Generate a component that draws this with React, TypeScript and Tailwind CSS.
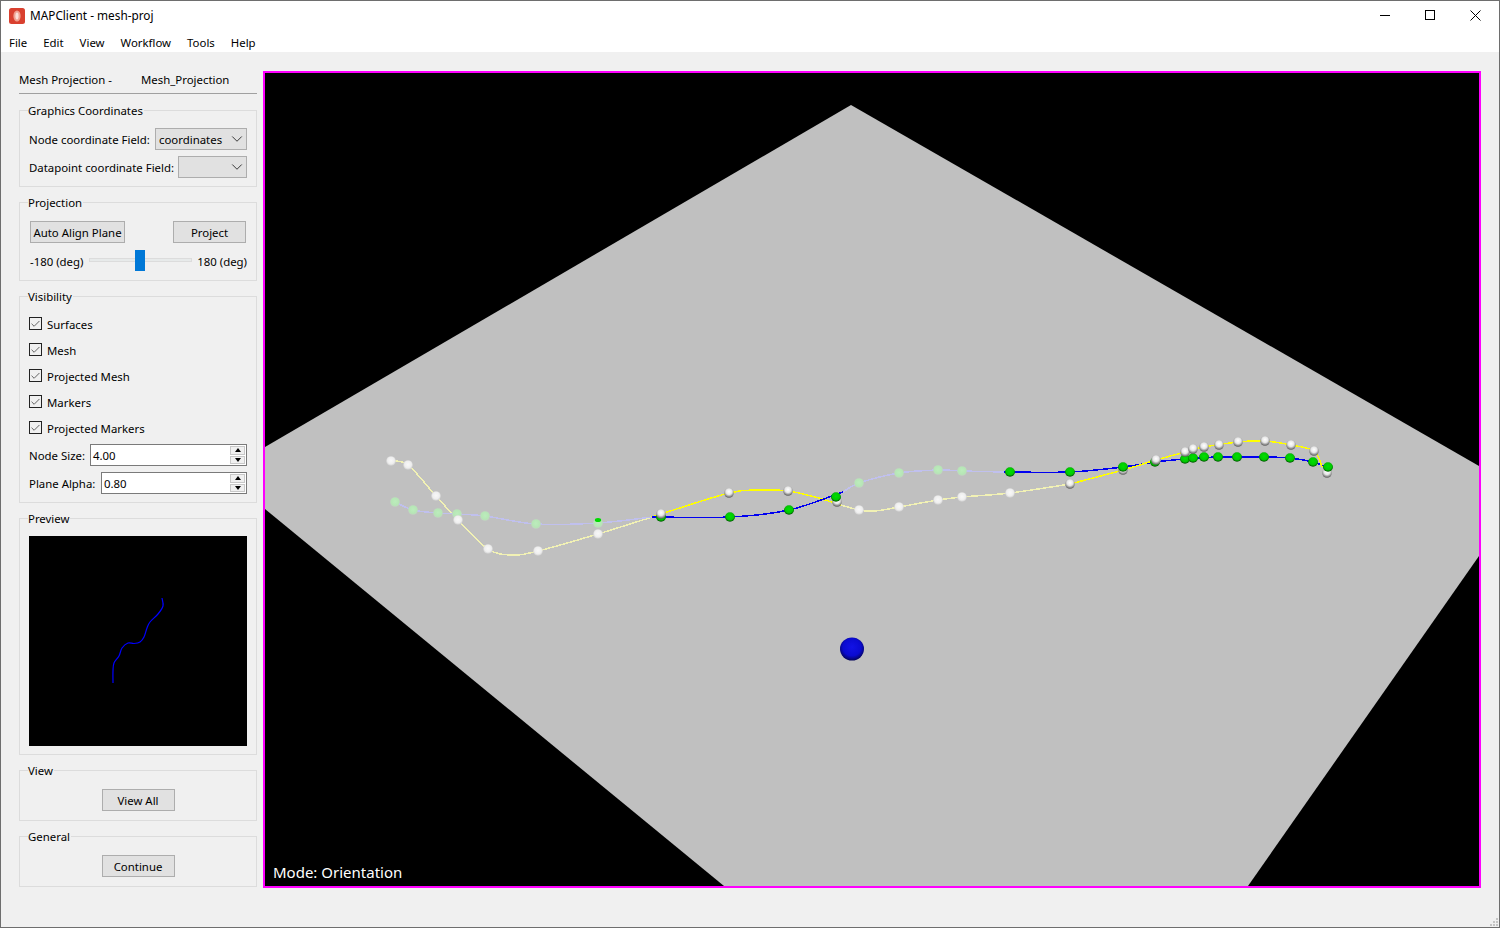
import { ChevronDown, Check } from 'lucide-react';
import type { ReactNode } from 'react';

type Pt = [number, number];

const font = "font-['Noto_Sans','Open_Sans',sans-serif]";

// page coordinates, the viewBox of the scene starts at the canvas corner
const whiteFaded: Pt[] = [[391, 461], [408, 465], [436, 496], [458, 520], [488, 549], [538, 551], [598, 534], [859, 510], [899, 507], [938, 500], [962, 497], [1010, 493]];
const whiteSolid: Pt[] = [[661, 514], [729, 493], [788, 491], [837, 502], [1070, 484], [1123, 470], [1156, 460], [1185, 452], [1193, 449], [1204, 447], [1219, 445], [1238, 442], [1265, 441], [1291, 445], [1314, 451], [1327, 473]];
const greenFaded: Pt[] = [[395, 502], [413, 510], [438, 513], [457, 514], [485, 516], [536, 524], [598, 523], [859, 483], [899, 473], [938, 470], [962, 471]];
const greenSolid: Pt[] = [[661, 517], [730, 517], [789, 510], [1010, 472], [1070, 472], [1155, 462], [1185, 459], [1193, 458], [1204, 457], [1218, 457], [1237, 457], [1264, 457], [1290, 458], [1313, 462]];
const greenTop: Pt[] = [[836, 497], [1123, 467], [1328, 467]];

const lines: { pts: Pt[]; color: string }[] = [
  { pts: [[391, 461], [408, 465], [436, 496], [458, 520], [488, 549], [512, 555], [538, 551], [598, 534], [652, 517]], color: '#f1f1b4' },
  { pts: [[395, 502], [413, 510], [438, 513], [457, 514], [485, 516], [536, 524], [598, 523], [652, 517]], color: '#c0c0ee' },
  { pts: [[843, 492], [859, 483], [899, 473], [938, 470], [962, 471], [1004, 472]], color: '#c0c0ee' },
  { pts: [[841, 505], [859, 510], [875, 511], [899, 507], [938, 500], [962, 497], [1010, 493], [1070, 484]], color: '#f1f1b4' },
  { pts: [[652, 517], [661, 514], [729, 493], [760, 490], [788, 491], [815, 497], [841, 505]], color: '#ffff00' },
  { pts: [[652, 517], [730, 517], [789, 510], [843, 492]], color: '#0000f0' },
  { pts: [[1004, 472], [1070, 472], [1123, 467], [1155, 462], [1185, 459], [1218, 457], [1264, 457], [1290, 458], [1313, 462], [1324, 466]], color: '#0000f0' },
  { pts: [[1070, 484], [1123, 470], [1156, 460], [1185, 452], [1204, 447], [1238, 442], [1265, 441], [1291, 445], [1314, 451], [1322, 467]], color: '#ffff00' },
];

const previewCurve: Pt[] = [[133, 62], [134, 70], [129, 78], [121, 86], [118, 92], [115, 101], [111, 106], [105, 107.5], [99, 107], [93, 112], [90, 120], [85, 127], [84, 135], [84, 147]];

// Catmull-Rom through the points
function smooth(pts: Pt[]) {
  let d = `M${pts[0][0]} ${pts[0][1]}`;
  for (let i = 0; i < pts.length - 1; i++) {
    const p0 = pts[Math.max(i - 1, 0)];
    const p1 = pts[i];
    const p2 = pts[i + 1];
    const p3 = pts[Math.min(i + 2, pts.length - 1)];
    const c1 = [p1[0] + (p2[0] - p0[0]) / 6, p1[1] + (p2[1] - p0[1]) / 6];
    const c2 = [p2[0] - (p3[0] - p1[0]) / 6, p2[1] - (p3[1] - p1[1]) / 6];
    d += ` C${c1[0]} ${c1[1]} ${c2[0]} ${c2[1]} ${p2[0]} ${p2[1]}`;
  }
  return d;
}

function Scene() {
  return (
    <svg viewBox="265 73 1214 813" className="block h-full w-full">
      <defs>
        <radialGradient id="white" cx="50%" cy="36%" r="62%">
          <stop offset="0%" stopColor="#ffffff" />
          <stop offset="50%" stopColor="#e6e6e6" />
          <stop offset="100%" stopColor="#5e5e5e" />
        </radialGradient>
        <radialGradient id="whiteFaded" cx="50%" cy="45%" r="55%">
          <stop offset="0%" stopColor="#f8f8f8" />
          <stop offset="65%" stopColor="#eeeeee" />
          <stop offset="100%" stopColor="#cccccc" />
        </radialGradient>
        <radialGradient id="green" cx="50%" cy="42%" r="58%">
          <stop offset="0%" stopColor="#00e000" />
          <stop offset="65%" stopColor="#00c800" />
          <stop offset="100%" stopColor="#004f00" />
        </radialGradient>
        <radialGradient id="greenFaded" cx="50%" cy="45%" r="55%">
          <stop offset="0%" stopColor="#bcecbc" />
          <stop offset="70%" stopColor="#b6e6b6" />
          <stop offset="100%" stopColor="#c0d4c0" />
        </radialGradient>
        <radialGradient id="blue" cx="50%" cy="42%" r="58%">
          <stop offset="0%" stopColor="#1212e6" />
          <stop offset="65%" stopColor="#0a0ad0" />
          <stop offset="100%" stopColor="#04045a" />
        </radialGradient>
      </defs>
      <polygon points="851,105 1479,466 1479,556 1248,886 724,886 265,509 265,447" fill="#c0c0c0" />
      {lines.map((l, i) => (
        <path key={i} d={smooth(l.pts)} fill="none" stroke={l.color} strokeWidth={1.5} shapeRendering="crispEdges" />
      ))}
      {greenFaded.map(([x, y], i) => <circle key={i} cx={x} cy={y} r={4.8} fill="url(#greenFaded)" />)}
      {whiteFaded.map(([x, y], i) => <circle key={i} cx={x} cy={y} r={4.8} fill="url(#whiteFaded)" />)}
      {greenSolid.map(([x, y], i) => <ellipse key={i} cx={x} cy={y} rx={5} ry={4.7} fill="url(#green)" />)}
      {whiteSolid.map(([x, y], i) => <circle key={i} cx={x} cy={y} r={4.8} fill="url(#white)" />)}
      {greenTop.map(([x, y], i) => <ellipse key={i} cx={x} cy={y} rx={5} ry={4.7} fill="url(#green)" />)}
      <ellipse cx={598} cy={520} rx={3.2} ry={2} fill="#00d800" />
      <ellipse cx={852} cy={649} rx={12} ry={11.5} fill="url(#blue)" />
    </svg>
  );
}

function Group({ title, children, className = '' }: { title: string; children: ReactNode; className?: string }) {
  return (
    <div className={`relative border border-[#dcdcdc] ${className}`}>
      <span className="absolute -top-[8px] left-[8px] bg-[#f0f0f0] pr-px leading-4">{title}</span>
      {children}
    </div>
  );
}

function Combo({ value, className = '' }: { value?: string; className?: string }) {
  return (
    <div className={`flex h-[22px] items-center justify-between border border-[#adadad] bg-[#e1e1e1] pl-[3px] ${className}`}>
      <span className="pt-px">{value}</span>
      <ChevronDown size={18} strokeWidth={1} />
    </div>
  );
}

function Button({ label, className = '' }: { label: string; className?: string }) {
  return (
    <div className={`flex h-[22px] w-[73px] items-center justify-center border border-[#adadad] bg-[#e1e1e1] pt-px ${className}`}>
      {label}
    </div>
  );
}

function CheckRow({ label }: { label: string }) {
  return (
    <div className="flex h-[13px] items-center gap-[5px]">
      <span className="flex h-[13px] w-[13px] items-center justify-center border border-[#222222] bg-[#f0f0f0]">
        <Check size={12} strokeWidth={2} className="text-[#555555]" />
      </span>
      <span className="pt-[3px]">{label}</span>
    </div>
  );
}

function Spin({ label, value, width }: { label: string; value: string; width: string }) {
  return (
    <div className="flex h-[22px] items-center justify-between">
      <span className="pt-px">{label}</span>
      <div className={`flex h-[22px] items-center justify-between border border-[#7a7a7a] bg-white pl-[2px] pr-px ${width}`}>
        <span className="pt-px">{value}</span>
        <div className="flex h-[18px] w-[15px] flex-col gap-px">
          <div className="flex flex-1 items-center justify-center border border-[#c8c8c8] bg-[#f0f0f0]">
            <span className="h-0 w-0 border-x-[3.5px] border-b-[4px] border-x-transparent border-b-black" />
          </div>
          <div className="flex flex-1 items-center justify-center border border-[#c8c8c8] bg-[#f0f0f0]">
            <span className="h-0 w-0 border-x-[3.5px] border-t-[4px] border-x-transparent border-t-black" />
          </div>
        </div>
      </div>
    </div>
  );
}

function Sidebar() {
  return (
    <div className="flex w-[238px] shrink-0 flex-col gap-[15px]">
      <div className="mb-px flex h-[23px] items-center border-b border-[#a0a0a0] pb-[5px]">
        <span className="w-[122px]">Mesh Projection -</span>
        <span>Mesh_Projection</span>
      </div>
      <Group title="Graphics Coordinates" className="flex h-[77px] flex-col gap-[6px] px-[9px] pt-[17px]">
        <div className="flex items-center justify-between whitespace-nowrap">
          <span className="pt-px">Node coordinate Field:</span>
          <Combo value="coordinates" className="w-[92px]" />
        </div>
        <div className="flex items-center justify-between whitespace-nowrap">
          <span className="pt-px">Datapoint coordinate Field:</span>
          <Combo className="w-[69px]" />
        </div>
      </Group>
      <Group title="Projection" className="flex h-[79px] flex-col px-[10px] pt-[18px]">
        <div className="flex justify-between">
          <Button label="Auto Align Plane" className="w-[95px] border-[#7a7a7a]" />
          <Button label="Project" />
        </div>
        <div className="-mr-px mt-[6px] flex h-[21px] items-center whitespace-nowrap">
          <span className="w-[59px] pt-[4px]">-180 (deg)</span>
          <div className="relative h-[4px] w-[103px] border border-[#dcdcdc] bg-[#e7eaea]">
            <span className="absolute -top-[9px] left-[45px] h-[21px] w-[10px] bg-[#0078d7]" />
          </div>
          <span className="ml-auto pt-[4px]">180 (deg)</span>
        </div>
      </Group>
      <Group title="Visibility" className="flex h-[207px] flex-col px-[9px] pt-[20px]">
        <div className="flex flex-col gap-[13px]">
          <CheckRow label="Surfaces" />
          <CheckRow label="Mesh" />
          <CheckRow label="Projected Mesh" />
          <CheckRow label="Markers" />
          <CheckRow label="Projected Markers" />
        </div>
        <div className="mt-[10px] flex flex-col gap-[6px]">
          <Spin label="Node Size:" value="4.00" width="w-[157px]" />
          <Spin label="Plane Alpha:" value="0.80" width="w-[146px]" />
        </div>
      </Group>
      <Group title="Preview" className="h-[237px] px-[9px] pt-[17px]">
        <svg viewBox="0 0 218 210" className="block h-[210px] w-[218px] bg-black">
          <path d={smooth(previewCurve)} fill="none" stroke="#0000ff" strokeWidth={1.2} />
        </svg>
      </Group>
      <Group title="View" className="flex h-[51px] justify-center pt-[18px]">
        <Button label="View All" />
      </Group>
      <Group title="General" className="flex h-[51px] justify-center pt-[18px]">
        <Button label="Continue" />
      </Group>
    </div>
  );
}

export default function App() {
  return (
    <div className={`${font} flex h-[928px] w-[1500px] flex-col overflow-hidden border border-[#6e6e6e] bg-[#f0f0f0] text-[11.4px] text-black`}>
      <div className="flex h-[29px] items-center justify-between bg-white">
        <div className="flex items-center pl-[8px]">
          <svg viewBox="0 0 16 16" className="h-[16px] w-[16px]">
            <rect width="16" height="16" rx="2.5" fill="#d9402f" />
            <ellipse cx="8" cy="8" rx="3.6" ry="5.6" fill="#f0a090" />
            <ellipse cx="8" cy="8" rx="1.6" ry="3.4" fill="#fbe0d8" />
          </svg>
          <span className="pl-[5px] text-[11.8px]">MAPClient - mesh-proj</span>
        </div>
        <div className="flex items-center gap-[34px] pr-[18px]">
          <svg viewBox="0 0 11 11" className="h-[11px] w-[11px]" shapeRendering="crispEdges">
            <path d="M0 5.5H10" stroke="#000" fill="none" />
          </svg>
          <svg viewBox="0 0 11 11" className="h-[11px] w-[11px]" shapeRendering="crispEdges">
            <rect x="0.5" y="0.5" width="9" height="9" stroke="#000" fill="none" />
          </svg>
          <svg viewBox="0 0 11 11" className="h-[11px] w-[11px]">
            <path d="M0.5 0.5L10.5 10.5M10.5 0.5L0.5 10.5" stroke="#000" fill="none" />
          </svg>
        </div>
      </div>
      <div className="flex h-[22px] items-center gap-[16px] bg-white pl-[8px] pt-[4px]">
        <span>File</span>
        <span>Edit</span>
        <span>View</span>
        <span>Workflow</span>
        <span>Tools</span>
        <span>Help</span>
      </div>
      <div className="relative flex flex-1 gap-[6px] px-[18px] pt-[19px]">
        <Sidebar />
        <div className="relative h-[817px] flex-1 border-2 border-[#ff00ff] bg-black">
          <Scene />
          <span className="absolute bottom-[4px] left-[8px] text-[15px] leading-5 text-white">Mode: Orientation</span>
        </div>
        <div className="absolute bottom-[1px] right-[1px] grid grid-cols-3 gap-px">
          <span className="col-start-3 h-[2px] w-[2px] bg-[#c4c4c4]" />
          <span className="col-start-2 h-[2px] w-[2px] bg-[#c4c4c4]" />
          <span className="h-[2px] w-[2px] bg-[#c4c4c4]" />
          <span className="h-[2px] w-[2px] bg-[#c4c4c4]" />
          <span className="h-[2px] w-[2px] bg-[#c4c4c4]" />
          <span className="h-[2px] w-[2px] bg-[#c4c4c4]" />
        </div>
      </div>
    </div>
  );
}
